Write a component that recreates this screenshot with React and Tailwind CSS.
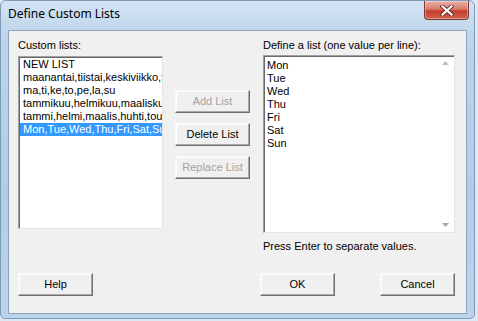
function Btn({ children, disabled = false }) {
  return (
    <div
      className={`h-[23px] w-[75px] flex items-center justify-center border border-t-[#f8f8f8] border-l-[#f8f8f8] border-r-[#6f6f6f] border-b-[#6f6f6f] bg-[#f0f0f0] shadow-[inset_-1px_-1px_0_#a8a8a8,inset_1px_1px_0_#ffffff] text-[11px] leading-[13px] ${
        disabled ? "text-[#a3a3a3]" : "text-black"
      }`}
    >
      {children}
    </div>
  );
}

function CloseButton() {
  return (
    <div className="w-[45px] h-[19px] rounded-b-[4px] border border-t-0 border-[#7a3a33] bg-[linear-gradient(180deg,#eab2a8_0%,#d87a6c_45%,#c4402f_55%,#d2604f_100%)] shadow-[inset_0_0_0_1px_rgba(255,255,255,0.35)] flex items-center justify-center">
      <svg width="14" height="11" viewBox="0 0 14 11">
        <path d="M2.5 1.5 L11.5 9.5 M11.5 1.5 L2.5 9.5" stroke="#6a2a22" strokeWidth="4" strokeLinecap="square" />
        <path d="M2.5 1.5 L11.5 9.5 M11.5 1.5 L2.5 9.5" stroke="#ffffff" strokeWidth="2.2" strokeLinecap="square" />
      </svg>
    </div>
  );
}

export default function App() {
  const lists = [
    "NEW LIST",
    "maanantai,tiistai,keskiviikko,torstai",
    "ma,ti,ke,to,pe,la,su",
    "tammikuu,helmikuu,maaliskuu,huhtikuu",
    "tammi,helmi,maalis,huhti,touko",
    "Mon,Tue,Wed,Thu,Fri,Sat,Sun",
  ];
  const values = ["Mon", "Tue", "Wed", "Thu", "Fri", "Sat", "Sun"];

  return (
    <div className="w-[478px] h-[321px] bg-[#dce8f4] font-['Liberation_Sans',Arial,sans-serif] text-[11px] leading-[13px] text-black overflow-hidden">
      <div className="w-[475px] h-[319px] rounded-t-[6px] rounded-b-[5px] border border-[#7c99b8] bg-[linear-gradient(180deg,#d3e3f3_0%,#bcd4ec_12%,#b2cce8_60%,#bcd3ec_100%)] flex flex-col">
        <div className="h-[29px] flex justify-between items-start pl-[7px] pr-[5px]">
          <div className="pt-[5px] font-['Noto_Sans',sans-serif] text-[12px] leading-[16px] text-black">
            Define Custom Lists
          </div>
          <CloseButton />
        </div>
        <div className="mx-[7px] h-[284px] border border-[#8fa4ba] bg-[#f0f0f0] flex flex-col pt-[8px] pl-[9px] pr-[11px] pb-[17px]">
          <div className="flex items-start">
            <div className="w-[145px] flex flex-col">
              <div className="h-[13px] mb-[4px]">Custom lists:</div>
              <div className="h-[173px] border border-[#a0a0a0] border-r-[#e3e3e3] border-b-[#e3e3e3] shadow-[inset_1px_1px_0_#696969] bg-white pt-[1px] pl-[1px] overflow-hidden">
                {lists.map((l, i) => (
                  <div
                    key={i}
                    className={`h-[13px] pl-[3px] whitespace-nowrap overflow-hidden ${
                      i === 5 ? "bg-[#3399ff] text-white" : ""
                    }`}
                  >
                    {l}
                  </div>
                ))}
              </div>
            </div>
            <div className="ml-[12px] pt-[51px] flex flex-col gap-[10px]">
              <Btn disabled>Add List</Btn>
              <Btn>Delete List</Btn>
              <Btn disabled>Replace List</Btn>
            </div>
            <div className="ml-[13px] w-[192px] flex flex-col">
              <div className="h-[13px] mb-[3px]">Define a list (one value per line):</div>
              <div className="h-[178px] border border-[#a0a0a0] border-r-[#e3e3e3] border-b-[#e3e3e3] shadow-[inset_1px_1px_0_#696969] bg-white flex">
                <div className="flex-1 pt-[3px] pl-[3px]">
                  {values.map((v) => (
                    <div key={v} className="h-[13px]">
                      {v}
                    </div>
                  ))}
                </div>
                <div className="w-[17px] flex flex-col justify-between items-center py-[5px]">
                  <svg width="7" height="4" viewBox="0 0 7 4">
                    <path d="M0 4 L3.5 0 L7 4 Z" fill="#c0c0c0" />
                  </svg>
                  <svg width="7" height="4" viewBox="0 0 7 4">
                    <path d="M0 0 L3.5 4 L7 0 Z" fill="#a8a8a8" />
                  </svg>
                </div>
              </div>
              <div className="mt-[7px] h-[13px]">Press Enter to separate values.</div>
            </div>
          </div>
          <div className="mt-auto flex items-end">
            <Btn>Help</Btn>
            <div className="flex-1" />
            <Btn>OK</Btn>
            <div className="w-[45px]" />
            <Btn>Cancel</Btn>
          </div>
        </div>
      </div>
    </div>
  );
}
